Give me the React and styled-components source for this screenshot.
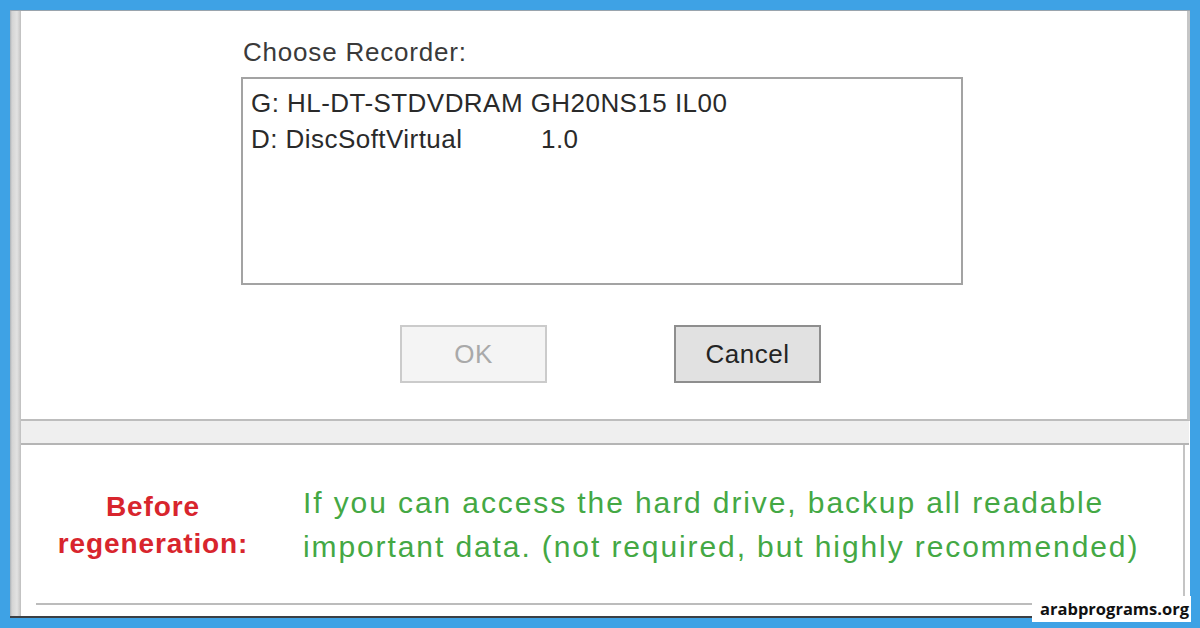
import styled, { createGlobalStyle } from 'styled-components';

const GlobalStyle = createGlobalStyle`
	html, body {
		margin: 0;
		padding: 0;
	}
	body {
		width: 1200px;
		height: 628px;
		overflow: hidden;
		background: #3ea2e5;
		font-family: 'Liberation Sans', Arial, sans-serif;
	}
`;

const drives = [
	{ name: 'G: HL-DT-STDVDRAM GH20NS15 IL00', version: '' },
	{ name: 'D: DiscSoftVirtual', version: '1.0' },
];

const App = () => {
	return (
		<>
			<GlobalStyle />
			<Page>
				<Window>
					<SideStrip />
					<Body>
						<TopPanel>
							<RecorderBlock>
								<Label>Choose Recorder:</Label>
								<ListBox>
									{drives.map((d, i) => (
										<ListItem key={i}>
											<DriveName $wide={!!d.version}>{d.name}</DriveName>
											{d.version}
										</ListItem>
									))}
								</ListBox>
								<ButtonRow>
									<DialogButton disabled>OK</DialogButton>
									<DialogButton $default>Cancel</DialogButton>
								</ButtonRow>
							</RecorderBlock>
						</TopPanel>
						<Separator />
						<BottomPanel>
							<StepRow>
								<StepLabel>
									Before
									<br />
									regeneration:
								</StepLabel>
								<StepText>
									If you can access the hard drive, backup all readable
									<br />
									important data. (not required, but highly recommended)
								</StepText>
							</StepRow>
							<BottomRule />
						</BottomPanel>
					</Body>
				</Window>
				<Watermark>arabprograms.org</Watermark>
			</Page>
		</>
	);
};

const Page = styled.div`
	position: relative;
	width: 1200px;
	height: 628px;
	padding: 10px 10px 10px 10px;
	box-sizing: border-box;
`;

const Window = styled.div`
	display: flex;
	height: 608px;
	border-top: 1px solid #9aa4ad;
	border-bottom: 2px solid #3c3f44;
	box-sizing: border-box;
	background: #ffffff;
`;

const SideStrip = styled.div`
	width: 11px;
	flex-shrink: 0;
	background: linear-gradient(to right, #a9b0b6 0, #d4d4d4 2px, #e2e2e2 7px, #c9c9c9 10px, #bdbdbd 11px);
`;

const Body = styled.div`
	flex: 1;
	display: flex;
	flex-direction: column;
`;

const TopPanel = styled.div`
	height: 410px;
	flex-shrink: 0;
	background: #ffffff;
	border-right: 3px solid #c6c6c6;
	border-bottom: 2px solid #bdbdbd;
	box-sizing: border-box;
	padding: 26px 0 0 220px;
`;

const RecorderBlock = styled.div`
	display: flex;
	flex-direction: column;
	width: 722px;
`;

const Label = styled.div`
	font-size: 26px;
	line-height: 30px;
	color: #3a3a3a;
	padding-left: 2px;
	margin-bottom: 10px;
	letter-spacing: 0.8px;
`;

const ListBox = styled.div`
	height: 208px;
	border: 2px solid #a3a3a3;
	box-sizing: border-box;
	padding: 6px 8px;
	background: #ffffff;
`;

const ListItem = styled.div`
	display: flex;
	font-size: 26px;
	line-height: 36px;
	color: #2a2a2a;
	white-space: nowrap;
	letter-spacing: 0.45px;
`;

const DriveName = styled.span`
	width: ${({ $wide }) => ($wide ? '290px' : 'auto')};
`;

const ButtonRow = styled.div`
	display: flex;
	gap: 127px;
	padding-left: 159px;
	margin-top: 40px;
`;

const DialogButton = styled.button`
	width: 147px;
	height: 58px;
	box-sizing: border-box;
	font-family: 'Liberation Sans', Arial, sans-serif;
	font-size: 26px;
	letter-spacing: 0.5px;
	padding: 0;
	color: ${({ $default }) => ($default ? '#242424' : '#a9a9a9')};
	background: ${({ $default }) => ($default ? '#e1e1e1' : '#f4f4f4')};
	border: 2px solid ${({ $default }) => ($default ? '#8e8e8e' : '#cbcbcb')};
`;

const Separator = styled.div`
	height: 22px;
	flex-shrink: 0;
	background: #efefef;
	border-bottom: 2px solid #b5b5b5;
	margin-right: 1px;
`;

const BottomPanel = styled.div`
	flex: 1;
	display: flex;
	flex-direction: column;
	border-right: 2px solid #c4c4c4;
	margin-right: 5px;
	background: #ffffff;
`;

const StepRow = styled.div`
	flex: 1;
	display: flex;
	align-items: center;
	padding-top: 2px;
`;

const StepLabel = styled.div`
	width: 264px;
	flex-shrink: 0;
	text-align: center;
	font-size: 28px;
	font-weight: 700;
	line-height: 37px;
	color: #d8252d;
	letter-spacing: 0.9px;
`;

const StepText = styled.div`
	margin-left: 18px;
	font-size: 30px;
	line-height: 44px;
	color: #44a844;
	white-space: nowrap;
	letter-spacing: 1.9px;
`;

const BottomRule = styled.div`
	height: 2px;
	margin: 0 0 11px 15px;
	background: #bcbcbc;
`;

const Watermark = styled.div`
	position: absolute;
	right: 9px;
	bottom: 6px;
	padding: 0 2px 0 8px;
	background: #ffffff;
	font-family: 'Open Sans', 'Liberation Sans', sans-serif;
	font-weight: 700;
	font-size: 16.5px;
	line-height: 26px;
	color: #111111;
`;

export default App;
